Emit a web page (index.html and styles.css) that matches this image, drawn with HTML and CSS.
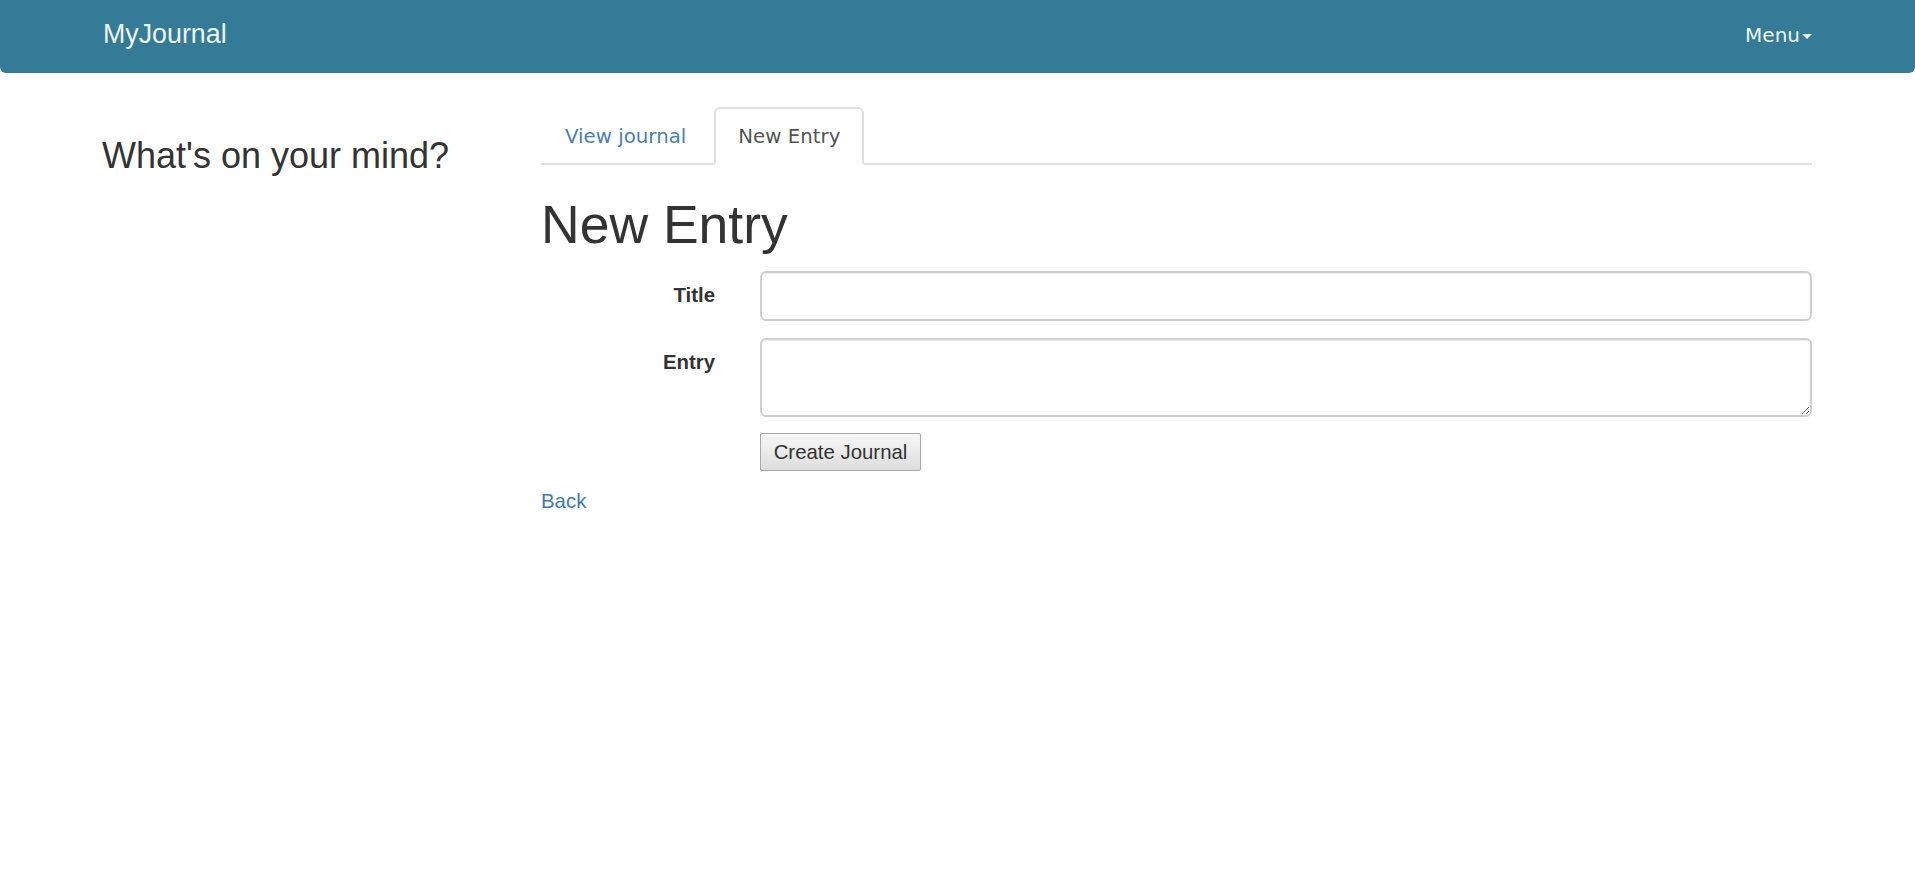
FILE: index.html
```html
<!DOCTYPE html>
<html lang="en">
<head>
<meta charset="utf-8">
<title>MyJournal</title>
<link rel="stylesheet" href="styles.css">
</head>
<body>
<nav class="navbar">
  <a class="brand" href="#">MyJournal</a>
  <a class="menu" href="#">Menu<span class="caret"></span></a>
</nav>
<main class="page">
  <aside class="side">
    <h3 class="side-title">What's on your mind?</h3>
  </aside>
  <section class="content">
    <ul class="tabs">
      <li class="tab"><a href="#">View journal</a></li>
      <li class="tab active"><a href="#">New Entry</a></li>
    </ul>
    <h1 class="heading">New Entry</h1>
    <form class="form">
      <label class="label" for="title">Title</label>
      <input class="field" id="title" type="text">
      <label class="label" for="entry">Entry</label>
      <textarea class="field area" id="entry"></textarea>
      <div class="spacer"></div>
      <div><button class="btn" type="button">Create Journal</button></div>
    </form>
    <a class="back" href="#">Back</a>
  </section>
</main>
</body>
</html>
```

FILE: styles.css
```css
html, body {
  margin: 0;
  padding: 0;
  background: #fff;
}
body {
  font-family: "Liberation Sans", Arial, sans-serif;
  font-size: 20.4px;
  line-height: 1.43;
  color: #333;
}
a {
  text-decoration: none;
}

.navbar {
  height: 73px;
  background: #347b97;
  border-radius: 0 0 6px 6px;
  display: flex;
  justify-content: space-between;
  align-items: flex-start;
  padding: 0 103px 0 103px;
  box-sizing: border-box;
}
.brand {
  display: block;
  margin-top: 20.5px;
  font-size: 26.8px;
  line-height: 1;
  color: #eef5f8;
}
.menu {
  display: flex;
  align-items: center;
  margin-top: 24.5px;
  font-family: "DejaVu Sans", Verdana, sans-serif;
  font-size: 20px;
  line-height: 1;
  color: #eef5f8;
}
.caret {
  display: inline-block;
  width: 0;
  height: 0;
  margin-left: 2px;
  margin-top: 3px;
  border-left: 5px solid transparent;
  border-right: 5px solid transparent;
  border-top: 5px solid #eef5f8;
}

.page {
  display: flex;
  padding: 0 103px 0 102px;
}
.side {
  width: 439px;
  flex: none;
}
.side-title {
  margin: 63px 0 0 0;
  font-size: 36px;
  font-weight: normal;
  line-height: 1.1;
  color: #333;
}
.content {
  flex: 1;
  min-width: 0;
}

.tabs {
  list-style: none;
  margin: 34px 0 0 0;
  padding: 0;
  display: flex;
  border-bottom: 2px solid #e0e0e0;
}
.tab {
  margin-bottom: -2px;
  margin-right: 4px;
}
.tab a {
  display: block;
  padding: 16px 22px 15.3px 22px;
  border: 2px solid transparent;
  border-radius: 6px 6px 0 0;
  font-family: "DejaVu Sans", Verdana, sans-serif;
  font-size: 19.8px;
  line-height: normal;
  color: #4a80b4;
}
.tab.active a {
  background: #fff;
  border-color: #e0e0e0;
  border-bottom-color: transparent;
  color: #555;
}

.heading {
  margin: 31px 0 0 0;
  font-size: 53.5px;
  font-weight: normal;
  line-height: 1.1;
  color: #333;
}

.form {
  margin-top: 16px;
  display: grid;
  grid-template-columns: 174px 1fr;
  column-gap: 45px;
  row-gap: 16.5px;
}
.label {
  text-align: right;
  font-weight: bold;
  padding-top: 10px;
  line-height: 29.2px;
}
.field {
  display: block;
  box-sizing: border-box;
  width: 100%;
  height: 50px;
  border: 2px solid #cfcfcf;
  border-radius: 6px;
  box-shadow: inset 0 1px 1px rgba(0, 0, 0, 0.075);
  font-family: inherit;
  font-size: 20.4px;
  padding: 8px 17px;
  margin: 0;
  background: #fff;
}
.area {
  height: 79px;
  resize: vertical;
}
.btn {
  display: block;
  height: 38px;
  width: 161px;
  padding: 0 10px;
  border: 1px solid #a9a9a9;
  border-radius: 2px;
  background: linear-gradient(#f7f7f7, #dddddd);
  font-family: "Liberation Sans", Arial, sans-serif;
  font-size: 20.4px;
  color: #333;
}
.back {
  display: inline-block;
  margin-top: 15.6px;
  color: #3f7bb5;
  line-height: 29.2px;
}
```
